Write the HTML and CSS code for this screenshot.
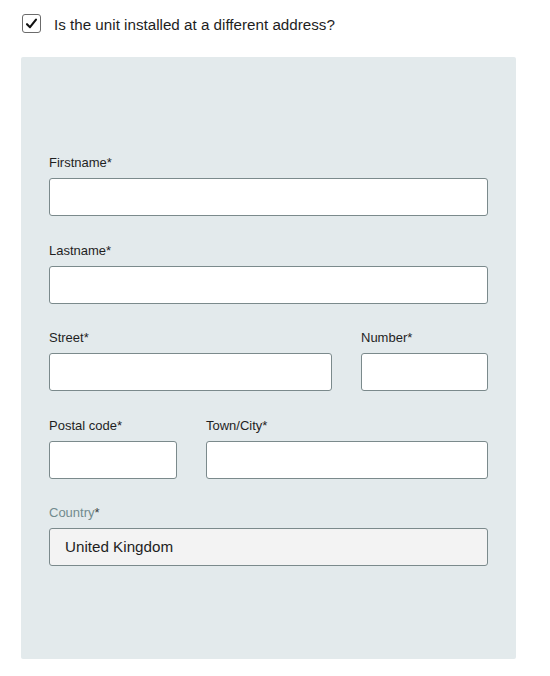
FILE: index.html
```html
<!DOCTYPE html>
<html lang="en">
<head>
<meta charset="utf-8">
<link rel="stylesheet" href="styles.css">
</head>
<body>
<div class="page">
  <label class="check-row">
    <span class="checkbox">
      <svg width="13" height="13" viewBox="0 0 13 13"><path d="M2 7.2 L5 10.2 L11 2.6" fill="none" stroke="#111" stroke-width="2.1" stroke-linecap="round" stroke-linejoin="round"/></svg>
    </span>
    <span class="check-text">Is the unit installed at a different address?</span>
  </label>

  <div class="panel">
    <div class="field">
      <div class="label">Firstname*</div>
      <div class="input"></div>
    </div>
    <div class="field">
      <div class="label">Lastname*</div>
      <div class="input"></div>
    </div>
    <div class="row row-street">
      <div class="field">
        <div class="label">Street*</div>
        <div class="input"></div>
      </div>
      <div class="field">
        <div class="label">Number*</div>
        <div class="input"></div>
      </div>
    </div>
    <div class="row row-town">
      <div class="field">
        <div class="label">Postal code*</div>
        <div class="input"></div>
      </div>
      <div class="field">
        <div class="label">Town/City*</div>
        <div class="input"></div>
      </div>
    </div>
    <div class="field">
      <div class="label label-disabled">Country<span class="star">*</span></div>
      <div class="input input-disabled">United Kingdom</div>
    </div>
  </div>
</div>
</body>
</html>
```

FILE: styles.css
```css
* { box-sizing: border-box; }
html, body { margin: 0; padding: 0; background: #fff; }
body {
  font-family: "Liberation Sans", Arial, sans-serif;
  color: #222;
}
.page {
  padding: 14px 0 0 21px;
  width: 516px;
}
.check-row {
  display: flex;
  align-items: center;
  height: 19px;
  padding-left: 1px;
}
.checkbox {
  width: 19px;
  height: 19px;
  border: 1px solid #6b6b6b;
  border-radius: 3px;
  background: #fff;
  display: flex;
  align-items: center;
  justify-content: center;
  flex: none;
}
.check-text {
  margin-left: 13px;
  font-size: 15.2px;
  line-height: 19px;
  color: #1e1e1e;
  position: relative;
  top: 0.5px;
}
.panel {
  margin-top: 24px;
  width: 495px;
  height: 602px;
  background: #e3eaec;
  border-radius: 2px;
  padding: 98px 28px 93px 28px;
  display: flex;
  flex-direction: column;
  gap: 26.5px;
}
.field {
  display: flex;
  flex-direction: column;
}
.label {
  font-size: 13px;
  line-height: 16px;
  height: 16px;
  margin-bottom: 7px;
  color: #1f1f1f;
}
.label-disabled { color: #728b8e; }
.label-disabled .star { color: #3a3f40; }
.input {
  height: 38px;
  background: #fff;
  border: 1px solid #7b8a8c;
  border-radius: 3px;
}
.input-disabled {
  background: #f3f3f3;
  font-size: 15.2px;
  line-height: 36px;
  padding-left: 15px;
  color: #1e1e1e;
}
.row {
  display: grid;
  column-gap: 29px;
}
.row-street { grid-template-columns: 283px 127px; }
.row-town { grid-template-columns: 128px 282px; }
```
